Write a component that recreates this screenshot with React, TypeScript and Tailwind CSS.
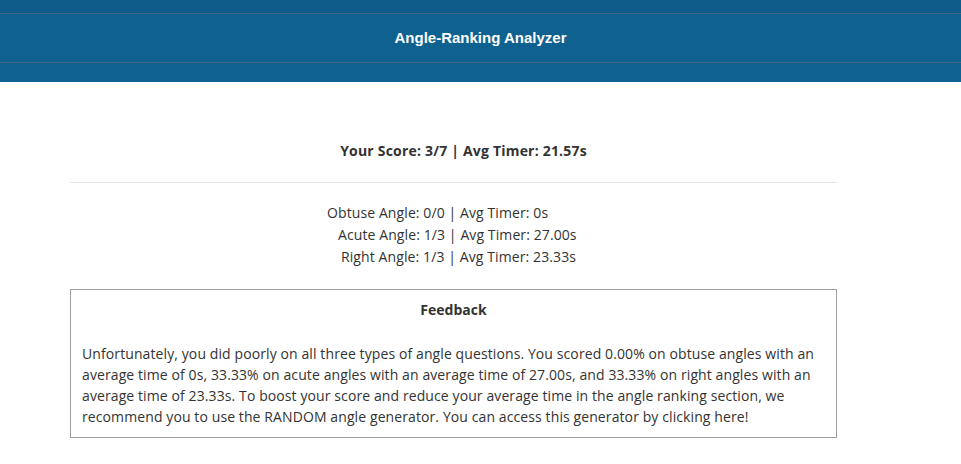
export default function App() {
  const font = { fontFamily: '"Open Sans", "Noto Sans", sans-serif' };
  return (
    <div className="min-h-[464px] bg-white text-[#333333]" style={font}>
      <header className="flex flex-col h-[82px] bg-[#0f6190]">
        <div className="h-[13px] bg-[#0d5c8a]" />
        <div className="h-px bg-[#3f6482]" />
        <div className="h-[48px] flex items-center justify-center">
          <h1
            className="text-[15px] font-bold text-white"
            style={{ fontFamily: '"Liberation Sans", Arial, sans-serif' }}
          >
            Angle-Ranking Analyzer
          </h1>
        </div>
        <div className="h-px bg-[#3f6482]" />
        <div className="flex-1" />
      </header>

      <main className="ml-[70px] w-[767px] pt-[59px]">
        <div className="text-center text-[14px] tracking-[0.2px] leading-[20px] font-bold pl-[20px]">
          Your Score: 3/7 | Avg Timer: 21.57s
        </div>
        <div className="mt-[21px] border-t border-[#e8e8e8]" />
        <div className="mt-[19px] text-[14px] tracking-[0.1px] leading-[22px]">
          <div className="pl-[257px]">Obtuse Angle: 0/0 | Avg Timer: 0s</div>
          <div className="pl-[268px]">Acute Angle: 1/3 | Avg Timer: 27.00s</div>
          <div className="pl-[271px]">Right Angle: 1/3 | Avg Timer: 23.33s</div>
        </div>
        <section className="mt-[21px] border border-[#a0a0a0] px-[11px] pt-[10px] pb-[10px]">
          <div className="text-center text-[14px] leading-[20px] font-bold">Feedback</div>
          <p className="mt-[23px] text-[14px] tracking-[0.1px] leading-[21px] whitespace-nowrap">
            Unfortunately, you did poorly on all three types of angle questions. You scored 0.00% on obtuse angles with an
            <br />
            average time of 0s, 33.33% on acute angles with an average time of 27.00s, and 33.33% on right angles with an
            <br />
            average time of 23.33s. To boost your score and reduce your average time in the angle ranking section, we
            <br />
            recommend you to use the RANDOM angle generator. You can access this generator by clicking here!
          </p>
        </section>
      </main>
    </div>
  );
}
